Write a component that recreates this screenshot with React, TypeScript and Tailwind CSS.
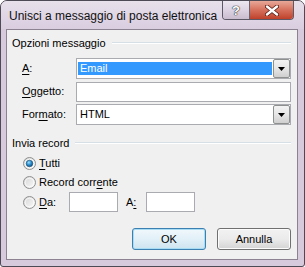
import React from 'react'

const font = "font-['Liberation_Sans',Arial,sans-serif]"

function DropButton() {
  return (
    <div className="w-[17px] h-[19px] border border-[#8e8f8f] rounded-[2px] bg-gradient-to-b from-[#f3f3f3] via-[#e6e6e6] to-[#cfcfcf] flex items-center justify-center">
      <svg width="7" height="4" viewBox="0 0 7 4">
        <path d="M0 0h7L3.5 4z" fill="#000" />
      </svg>
    </div>
  )
}

function Radio({ checked }: { checked?: boolean }) {
  return (
    <svg width="13" height="13" viewBox="0 0 13 13" className="shrink-0">
      <defs>
        <linearGradient id="rg" x1="0" y1="0" x2="1" y2="1">
          <stop offset="0" stopColor="#d4d4d4" />
          <stop offset="1" stopColor="#fbfbfb" />
        </linearGradient>
        <radialGradient id="dot" cx="0.4" cy="0.35" r="0.7">
          <stop offset="0" stopColor="#9fe0ff" />
          <stop offset="0.5" stopColor="#2b8fd0" />
          <stop offset="1" stopColor="#0f4a78" />
        </radialGradient>
      </defs>
      <circle cx="6.5" cy="6.5" r="6" fill="url(#rg)" stroke="#8f8f8f" strokeWidth="1" />
      <circle cx="6.5" cy="6.5" r="4.3" fill="none" stroke="#ffffff" strokeOpacity="0.7" strokeWidth="1" />
      {checked && <circle cx="6.5" cy="6.5" r="3.3" fill="url(#dot)" stroke="#1d4f73" strokeWidth="0.6" />}
    </svg>
  )
}

function GroupHeader({ label }: { label: string }) {
  return (
    <div className="flex items-center h-[14px] pl-[5px] pr-[6px]">
      <span className="leading-[14px]">{label}</span>
      <div className="flex-1 ml-[6px] border-t border-[#d5dfe5] border-b border-b-white" />
    </div>
  )
}

function Button({ label, primary }: { label: string; primary?: boolean }) {
  return (
    <div
      className={`w-[74px] h-[22px] rounded-[3px] border flex items-center justify-center ${
        primary
          ? 'border-[#3c7fb1] bg-gradient-to-b from-[#f0f8fc] via-[#e2f0f8] to-[#cde4f0] shadow-[inset_0_0_0_1px_#a8dcf5]'
          : 'border-[#707070] bg-gradient-to-b from-[#f2f2f2] via-[#ebebeb] to-[#d4d4d4] shadow-[inset_0_0_0_1px_#fcfcfc]'
      }`}
    >
      {label}
    </div>
  )
}

export default function App() {
  return (
    <div className={`w-[305px] h-[267px] ${font} text-[11px] text-black`}>
      <div className="w-[305px] h-[267px] rounded-t-[7px] rounded-b-[3px] border border-[#4d4a55] bg-[#d7cadd] flex flex-col overflow-hidden">
        {/* title bar */}
        <div className="h-[28px] shrink-0 flex items-start bg-gradient-to-b from-[#e7e1eb] to-[#d9cde0]">
          <span className="ml-[8px] mt-[7px] text-[12px] leading-[16px] text-[#111] whitespace-nowrap">
            Unisci a messaggio di posta elettronica
          </span>
          <div className="ml-auto mr-[10px] flex border border-t-0 border-[#5d5866] rounded-b-[4px] overflow-hidden h-[19px] shrink-0">
            <div className="w-[27px] h-full border-r border-[#6a6472] bg-gradient-to-b from-[#ece7f0] via-[#ddd3e2] to-[#c9bccf] flex items-center justify-center">
              <span className="text-[13px] font-bold leading-none text-white [text-shadow:0_0_1px_#333,0_0_1px_#333,0_0_1px_#333]">?</span>
            </div>
            <div className="w-[43px] h-full bg-gradient-to-b from-[#e8a899] via-[#d5705c] to-[#c0402a] flex items-center justify-center">
              <svg width="14" height="11" viewBox="0 0 14 11">
                <path d="M2 1.5l10 8M12 1.5l-10 8" stroke="#5a1a12" strokeWidth="4" strokeLinecap="round" />
                <path d="M2 1.5l10 8M12 1.5l-10 8" stroke="#ffffff" strokeWidth="2.4" strokeLinecap="round" />
              </svg>
            </div>
          </div>
        </div>

        {/* client area */}
        <div className="ml-[5px] mr-[6px] h-[231px] shrink-0 border border-[#8c8292] bg-[#f0f0f0] flex flex-col">
          <div className="mt-[6px]">
            <GroupHeader label="Opzioni messaggio" />
          </div>

          <div className="mt-[8px] flex flex-col gap-[2px] pl-[15px]">
            <div className="flex items-center h-[21px]">
              <span className="w-[54px]">
                <u className="underline-offset-2">A</u>:
              </span>
              <div className="w-[215px] h-[21px] border border-[#a9abb1] bg-white flex items-center pl-[1px]">
                <div className="flex-1 h-[13px] bg-[#3399ff] text-white leading-[13px] pl-[2px]">Email</div>
                <div className="ml-[1px]">
                  <DropButton />
                </div>
              </div>
            </div>
            <div className="flex items-center h-[21px]">
              <span className="w-[54px]">
                <u className="underline-offset-2">O</u>ggetto:
              </span>
              <div className="w-[215px] h-[20px] border border-[#a9abb1] bg-white" />
            </div>
            <div className="flex items-center h-[21px]">
              <span className="w-[54px]">
                For<u className="underline-offset-2">m</u>ato:
              </span>
              <div className="w-[215px] h-[21px] border border-[#a9abb1] bg-white flex items-center pl-[3px]">
                <div className="flex-1 leading-[13px]">HTML</div>
                <DropButton />
              </div>
            </div>
          </div>

          <div className="mt-[11px]">
            <GroupHeader label="Invia record" />
          </div>

          <div className="mt-[4px] pl-[16px] flex flex-col">
            <div className="flex items-center h-[19px]">
              <Radio checked />
              <span className="ml-[3px]">
                <u className="underline-offset-2">T</u>utti
              </span>
            </div>
            <div className="flex items-center h-[19px]">
              <Radio />
              <span className="ml-[3px]">
                Record corr<u className="underline-offset-2">e</u>nte
              </span>
            </div>
            <div className="flex items-center h-[20px]">
              <Radio />
              <span className="ml-[3px] w-[30px]">
                <u className="underline-offset-2">D</u>a:
              </span>
              <div className="w-[49px] h-[20px] border border-[#a9abb1] bg-white" />
              <span className="ml-[8px] w-[20px]">
                A<u className="underline-offset-2">:</u>
              </span>
              <div className="w-[49px] h-[20px] border border-[#a9abb1] bg-white" />
            </div>
          </div>

          <div className="mt-[16px] flex justify-end gap-[11px] pr-[6px]">
            <Button label="OK" primary />
            <Button label="Annulla" />
          </div>
        </div>
      </div>
    </div>
  )
}
